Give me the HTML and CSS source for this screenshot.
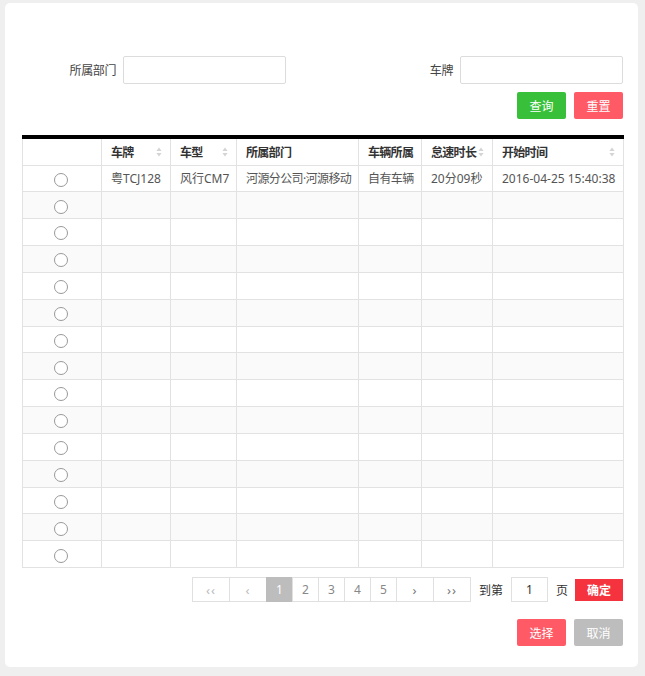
FILE: index.html
```html
<!DOCTYPE html>
<html lang="zh-CN">
<head>
<meta charset="utf-8">
<link rel="stylesheet" href="styles.css">
</head>
<body>
<div class="card">
  <div class="search">
    <div class="field">
      <label class="lbl">所属部门</label>
      <input class="txt" type="text">
    </div>
    <div class="field">
      <label class="lbl">车牌</label>
      <input class="txt" type="text">
    </div>
  </div>
  <div class="actions">
    <button class="btn btn-green">查询</button>
    <button class="btn btn-red">重置</button>
  </div>

  <table class="grid">
    <colgroup>
      <col style="width:79px"><col style="width:69px"><col style="width:66px"><col style="width:122px"><col style="width:63px"><col style="width:71px"><col style="width:131px">
    </colgroup>
    <thead>
      <tr>
        <th></th>
        <th><span class="th">车牌<svg class="sort" viewBox="0 0 6 10" width="6" height="10"><path d="M3 0.5L5.6 4H0.4Z M3 9.5L5.6 6H0.4Z"/></svg></span></th>
        <th><span class="th">车型<svg class="sort" viewBox="0 0 6 10" width="6" height="10"><path d="M3 0.5L5.6 4H0.4Z M3 9.5L5.6 6H0.4Z"/></svg></span></th>
        <th>所属部门</th>
        <th>车辆所属</th>
        <th><span class="th">怠速时长<svg class="sort" viewBox="0 0 6 10" width="6" height="10"><path d="M3 0.5L5.6 4H0.4Z M3 9.5L5.6 6H0.4Z"/></svg></span></th>
        <th><span class="th">开始时间<svg class="sort" viewBox="0 0 6 10" width="6" height="10"><path d="M3 0.5L5.6 4H0.4Z M3 9.5L5.6 6H0.4Z"/></svg></span></th>
      </tr>
    </thead>
    <tbody>
      <tr><td class="rc"><span class="radio"></span></td><td>粤TCJ128</td><td>风行CM7</td><td class="cjk">河源分公司·河源移动</td><td class="cjk">自有车辆</td><td>20分09秒</td><td>2016-04-25 15:40:38</td></tr>
      <tr><td class="rc"><span class="radio"></span></td><td></td><td></td><td></td><td></td><td></td><td></td></tr>
      <tr><td class="rc"><span class="radio"></span></td><td></td><td></td><td></td><td></td><td></td><td></td></tr>
      <tr><td class="rc"><span class="radio"></span></td><td></td><td></td><td></td><td></td><td></td><td></td></tr>
      <tr><td class="rc"><span class="radio"></span></td><td></td><td></td><td></td><td></td><td></td><td></td></tr>
      <tr><td class="rc"><span class="radio"></span></td><td></td><td></td><td></td><td></td><td></td><td></td></tr>
      <tr><td class="rc"><span class="radio"></span></td><td></td><td></td><td></td><td></td><td></td><td></td></tr>
      <tr><td class="rc"><span class="radio"></span></td><td></td><td></td><td></td><td></td><td></td><td></td></tr>
      <tr><td class="rc"><span class="radio"></span></td><td></td><td></td><td></td><td></td><td></td><td></td></tr>
      <tr><td class="rc"><span class="radio"></span></td><td></td><td></td><td></td><td></td><td></td><td></td></tr>
      <tr><td class="rc"><span class="radio"></span></td><td></td><td></td><td></td><td></td><td></td><td></td></tr>
      <tr><td class="rc"><span class="radio"></span></td><td></td><td></td><td></td><td></td><td></td><td></td></tr>
      <tr><td class="rc"><span class="radio"></span></td><td></td><td></td><td></td><td></td><td></td><td></td></tr>
      <tr><td class="rc"><span class="radio"></span></td><td></td><td></td><td></td><td></td><td></td><td></td></tr>
      <tr><td class="rc"><span class="radio"></span></td><td></td><td></td><td></td><td></td><td></td><td></td></tr>
    </tbody>
  </table>

  <div class="pager">
    <ul class="pages">
      <li class="pg wide arrow">&lsaquo;&lsaquo;</li>
      <li class="pg wide arrow">&lsaquo;</li>
      <li class="pg active">1</li>
      <li class="pg">2</li>
      <li class="pg">3</li>
      <li class="pg">4</li>
      <li class="pg">5</li>
      <li class="pg wide arrow dark">&rsaquo;</li>
      <li class="pg wide arrow dark">&rsaquo;&rsaquo;</li>
    </ul>
    <span class="goto">到第</span>
    <input class="pgnum" type="text" value="1">
    <span class="goto">页</span>
    <button class="ok">确定</button>
  </div>

  <div class="footer">
    <button class="btn btn-red">选择</button>
    <button class="btn btn-gray">取消</button>
  </div>
</div>
</body>
</html>
```

FILE: styles.css
```css
html, body {
  margin: 0;
  padding: 0;
}
body {
  background: #efefef;
  font-family: "Noto Sans", "Noto Sans CJK SC", sans-serif;
  font-size: 12px;
  color: #333;
  padding: 3px 7px 9px 5px;
}
.card {
  background: #fff;
  border-radius: 5px;
  padding: 53px 15px 20px 17px;
  box-sizing: border-box;
  width: 633px;
  height: 664px;
}
.search {
  display: flex;
  justify-content: space-between;
}
.field {
  display: flex;
  align-items: center;
  gap: 7px;
}
.lbl {
  font-size: 12px;
  color: #444;
  text-align: right;
  width: 94px;
  letter-spacing: -0.4px;
}
.field + .field .lbl {
  width: auto;
}
.txt {
  width: 163px;
  height: 28px;
  box-sizing: border-box;
  border: 1px solid #dcdcdc;
  border-radius: 2px;
  margin: 0;
  padding: 0 6px;
  outline: none;
}
.actions, .footer {
  display: flex;
  justify-content: flex-end;
  gap: 8px;
}
.actions {
  margin-top: 8px;
}
.footer {
  margin-top: 17px;
}
.btn {
  width: 49px;
  height: 27px;
  border: 0;
  border-radius: 2px;
  color: #fff;
  font-family: inherit;
  font-size: 12px;
  padding: 0;
  cursor: pointer;
}
.btn-green { background: #39c03a; }
.btn-red { background: #ff5a66; }
.btn-gray { background: #bdbdbd; }

.grid {
  margin-top: 16px;
  width: 601px;
  border-collapse: collapse;
  table-layout: fixed;
  border-top: 4px solid #000;
  font-size: 12px;
}
.grid th, .grid td {
  border: 1px solid #e2e2e2;
  padding: 0 8px 0 9px;
  text-align: left;
  white-space: nowrap;
  overflow: hidden;
}
.grid thead tr {
  height: 28px;
}
.grid th {
  font-weight: bold;
  color: #333;
  border-top: 0;
  letter-spacing: -0.7px;
}
.th {
  display: flex;
  justify-content: space-between;
  align-items: center;
}
.sort {
  fill: #d4d4d4;
  flex: none;
}
.grid tbody tr {
  height: 26.85px;
}
.grid tbody tr:nth-child(even) td {
  background: #fafafa;
}
.grid td {
  color: #555;
}
.grid td.cjk {
  letter-spacing: -0.6px;
}
.grid td.rc {
  text-align: center;
  padding: 0;
}
.radio {
  display: inline-block;
  width: 12px;
  height: 12px;
  border: 1px solid #999;
  border-radius: 50%;
  vertical-align: middle;
  background: #fff;
  margin-left: -2px;
}

.pager {
  margin-top: 9px;
  display: flex;
  justify-content: flex-end;
  align-items: center;
  height: 25px;
}
.pages {
  display: flex;
  list-style: none;
  margin: 0 8px 0 0;
  padding: 0;
}
.pg {
  width: 27px;
  height: 25px;
  box-sizing: border-box;
  border: 1px solid #e0e0e0;
  margin-left: -1px;
  display: flex;
  align-items: center;
  justify-content: center;
  color: #888;
  font-size: 12px;
}
.pg:first-child { margin-left: 0; }
.pg.wide { width: 38px; }
.pg.arrow { color: #bbb; font-size: 13px; letter-spacing: 1px; }
.pg.arrow.dark { color: #777; }
.pg.active {
  background: #bdbdbd;
  border-color: #bdbdbd;
  color: #fff;
}
.goto {
  color: #333;
  margin: 0 8px 0 0;
}
.pgnum {
  width: 37px;
  height: 25px;
  box-sizing: border-box;
  border: 1px solid #e0e0e0;
  text-align: center;
  font-family: inherit;
  font-size: 12px;
  color: #333;
  margin: 0 8px 0 0;
  padding: 0;
  outline: none;
}
.ok {
  width: 48px;
  height: 22px;
  border: 0;
  background: #f5333f;
  color: #fff;
  font-family: inherit;
  font-size: 12px;
  font-weight: bold;
  padding: 0;
  margin-left: -1px;
}
```
